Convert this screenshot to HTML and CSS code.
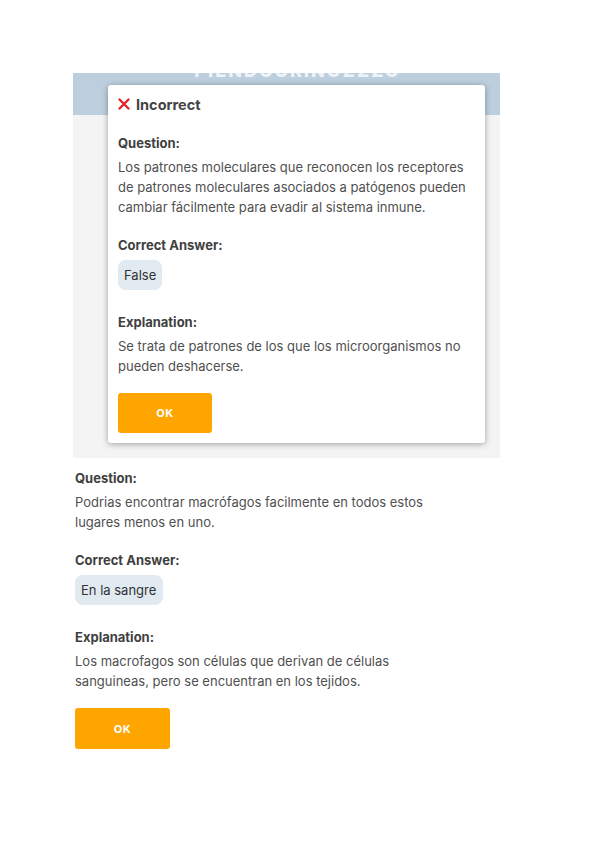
FILE: index.html
```html
<!DOCTYPE html>
<html lang="es">
<head>
<meta charset="utf-8">
<link rel="stylesheet" href="styles.css">
</head>
<body>
<div class="panel">
  <div class="band"><div class="band-title">PIENDOURINOZZZO</div></div>
  <div class="modal">
    <div class="title">
      <svg class="xicon" viewBox="0 0 12 12" width="12" height="12"><path d="M1.5 1.5 L10.5 10.5 M10.5 1.5 L1.5 10.5" stroke="#e3262a" stroke-width="2.4" stroke-linecap="round"/></svg>
      <span>Incorrect</span>
    </div>
    <div class="label first">Question:</div>
    <p class="text">Los patrones moleculares que reconocen los receptores de patrones moleculares asociados a patógenos pueden cambiar fácilmente para evadir al sistema inmune.</p>
    <div class="label">Correct Answer:</div>
    <div class="pill">False</div>
    <div class="label after-pill">Explanation:</div>
    <p class="text">Se trata de patrones de los que los microorganismos no pueden deshacerse.</p>
    <button class="ok">OK</button>
  </div>
</div>
<div class="section">
  <div class="label top">Question:</div>
  <p class="text">Podrias encontrar macrófagos facilmente en todos estos lugares menos en uno.</p>
  <div class="label">Correct Answer:</div>
  <div class="pill wide">En la sangre</div>
  <div class="label after-pill">Explanation:</div>
  <p class="text">Los macrofagos son células que derivan de células sanguineas, pero se encuentran en los tejidos.</p>
  <button class="ok">OK</button>
</div>
</body>
</html>
```

FILE: styles.css
```css
html, body {
  margin: 0;
  padding: 0;
  background: #ffffff;
  font-family: Inter, "Noto Sans", sans-serif;
  color: #4a4a4a;
}
.panel {
  position: relative;
  margin: 73px 0 0 73px;
  width: 427px;
  height: 385px;
  background: #f4f4f4;
}
.band {
  height: 42px;
  background: #bdcfdf;
  overflow: hidden;
  display: flex;
  justify-content: center;
}
.band-title {
  margin-top: -11px;
  padding-left: 22px;
  font-size: 18px;
  line-height: 18px;
  font-weight: 800;
  letter-spacing: 2px;
  color: rgba(255, 255, 255, 0.75);
}
.modal {
  position: absolute;
  left: 35px;
  top: 12px;
  width: 358px;
  padding: 9px 9px 10px 10px;
  background: #ffffff;
  border-radius: 3px;
  box-shadow: 0 1px 6px rgba(0, 0, 0, 0.35);
}
.title {
  display: flex;
  align-items: center;
  gap: 6px;
  height: 20px;
  font-size: 14.5px;
  font-weight: 700;
  color: #444;
}
.xicon { display: block; }
.label {
  font-size: 13px;
  line-height: 20px;
  font-weight: 700;
  color: #3f3f3f;
  margin: 18px 0 4px;
}
.label.first { margin-top: 19px; }
.label.top { margin-top: 0; }
.label.after-pill { margin-top: 22px; }
.text {
  margin: 0;
  font-size: 13px;
  line-height: 20px;
  color: #505050;
}
.pill {
  display: inline-block;
  margin-top: 1px;
  padding: 5px 6px;
  font-size: 13px;
  line-height: 20px;
  color: #333;
  background: #e1e9f1;
  border-radius: 8px;
}
.pill.wide { padding: 5px 7px 5px 6px; }
.ok {
  display: block;
  margin-top: 17px;
  width: 94px;
  height: 40px;
  border: none;
  border-radius: 3px;
  background: #ffa500;
  color: #fff;
  font-family: Inter, "Noto Sans", sans-serif;
  font-size: 11px;
  font-weight: 700;
  letter-spacing: 0.5px;
}
.section {
  margin: 10px 0 0 75px;
  width: 358px;
}
.section .ok { width: 95px; height: 41px; }
```
